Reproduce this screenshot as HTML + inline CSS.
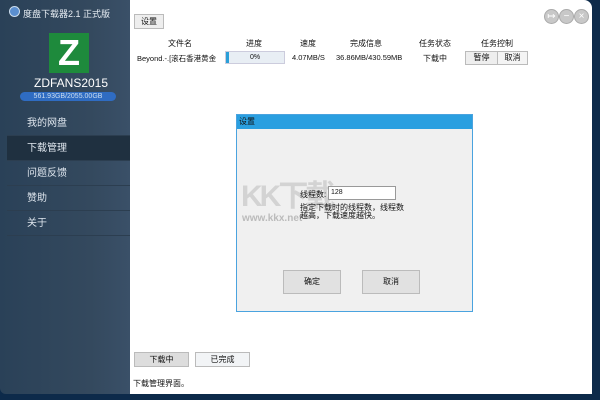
<!DOCTYPE html>
<html><head><meta charset="utf-8"><style>
*{margin:0;padding:0;box-sizing:border-box}
body{width:600px;height:400px;overflow:hidden;background:#0d2a4a;font-family:"Liberation Sans","Noto Sans CJK SC",sans-serif;position:relative}
.side{position:absolute;left:0;top:0;width:130px;height:394px;background:linear-gradient(90deg,#2a4158,#34495e 70%,#3a5068);border-radius:0 0 0 6px}
.main{position:absolute;left:130px;top:0;width:462px;height:394px;background:#fff;border-radius:0 8px 0 0;font-size:8px;color:#111}
.t{position:absolute;white-space:nowrap}
.menu{position:absolute;left:7px;width:123px;height:25px;color:#dfe6ee;font-size:10px;line-height:25px;padding-left:20px;border-bottom:1px solid #2c3e50}
.btn{position:absolute;border:1px solid #bbb;background:#eee;text-align:center;font-size:8px}
.c{position:absolute;width:15px;height:15px;border-radius:50%;background:#c8c8c8;border:1px solid #aaa;top:9px;color:#fff;font-size:10px;line-height:13px;text-align:center}
</style></head><body>
<div class="side">
 <div class="t" style="left:9px;top:6px;width:11px;height:11px;border-radius:50%;background:#5b8fd0;border:1px solid #cde"></div>
 <div class="t" style="left:23px;top:7px;color:#e8eef4;font-size:9px">度盘下载器2.1 正式版</div>
 <div class="t" style="left:49px;top:33px;width:40px;height:40px;background:#1e8a3c;color:#fff;font-size:36px;font-weight:bold;text-align:center;line-height:40px">Z</div>
 <div class="t" style="left:34px;top:76px;color:#fff;font-size:12px">ZDFANS2015</div>
 <div class="t" style="left:20px;top:92px;width:96px;height:9px;border-radius:5px;background:#2f6cc2;color:#cde;font-size:7px;text-align:center;line-height:9px">561.93GB/2055.00GB</div>
 <div class="menu" style="top:111px">我的网盘</div>
 <div class="menu" style="top:136px;background:#1f3040">下载管理</div>
 <div class="menu" style="top:161px">问题反馈</div>
 <div class="menu" style="top:186px">赞助</div>
 <div class="menu" style="top:211px">关于</div>
</div>
<div class="main">
 <div class="btn" style="left:4px;top:14px;width:30px;height:15px;line-height:13px">设置</div>
 <div class="c" style="left:414px">↦</div><div class="c" style="left:429px">−</div><div class="c" style="left:444px">×</div>
 <div class="t" style="left:38px;top:38px">文件名</div>
 <div class="t" style="left:116px;top:38px">进度</div>
 <div class="t" style="left:170px;top:38px">速度</div>
 <div class="t" style="left:220px;top:38px">完成信息</div>
 <div class="t" style="left:289px;top:38px">任务状态</div>
 <div class="t" style="left:351px;top:38px">任务控制</div>
 <div class="t" style="left:7px;top:53px;font-size:7.5px">Beyond.-.[滚石香港黄金</div>
 <div class="t" style="left:95px;top:51px;width:60px;height:13px;background:#e8eef4;border:1px solid #ccd;font-size:7px;text-align:center;line-height:11px"><span style="position:absolute;left:0;top:0;width:3px;height:11px;background:#2a9fd8"></span>0%</div>
 <div class="t" style="left:162px;top:53px;font-size:7.5px">4.07MB/S</div>
 <div class="t" style="left:206px;top:53px;font-size:7.5px">36.86MB/430.59MB</div>
 <div class="t" style="left:293px;top:53px">下载中</div>
 <div class="btn" style="left:335px;top:51px;width:33px;height:14px;line-height:12px">暂停</div>
 <div class="btn" style="left:367px;top:51px;width:31px;height:14px;line-height:12px;background:#f4f4f4">取消</div>
 <div class="t" style="left:106px;top:114px;width:237px;height:198px;background:#f0f0f0;border:1px solid #4aa3df">
  <div style="height:14px;background:#2a9fe0;color:#111;font-size:8px;line-height:14px;padding-left:2px">设置</div>
  <div class="t" style="left:4px;top:56px;color:#ccc;font-size:30px;font-weight:bold;letter-spacing:-3px;opacity:.8">KK下载</div>
  <div class="t" style="left:5px;top:98px;color:#bbb;font-size:10px;font-weight:bold">www.kkx.net</div>
  <div class="t" style="left:63px;top:74px">线程数:</div>
  <div class="t" style="left:91px;top:71px;width:68px;height:14px;background:#fff;border:1px solid #999;font-size:7px;line-height:12px;padding-left:2px">128</div>
  <div class="t" style="left:63px;top:89px;line-height:8px">指定下载时的线程数，线程数<br>越高，下载速度越快。</div>
  <div class="btn" style="left:46px;top:155px;width:58px;height:24px;line-height:22px;background:#e1e1e1">确定</div>
  <div class="btn" style="left:125px;top:155px;width:58px;height:24px;line-height:22px;background:#e1e1e1">取消</div>
 </div>
 <div class="btn" style="left:4px;top:352px;width:55px;height:15px;line-height:13px;background:#ddd">下载中</div>
 <div class="btn" style="left:65px;top:352px;width:55px;height:15px;line-height:13px;background:#f2f4f6">已完成</div>
 <div class="t" style="left:3px;top:378px">下载管理界面。</div>
</div>
</body></html>
